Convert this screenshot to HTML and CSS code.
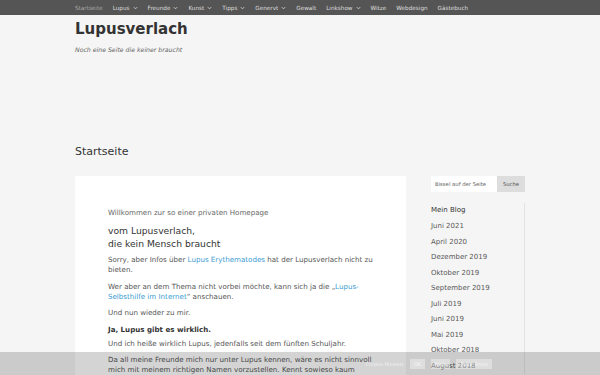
FILE: index.html
```html
<!DOCTYPE html>
<html>
<head>
  <title>Lupusverlach</title>
  <meta name="viewport" content="width=device-width, initial-scale=1.0" />
  <link rel="stylesheet" href="styles.css">
</head>
<body>

  <nav class="topnav">
    <div class="wrap nav-items">
      <a class="current">Startseite</a>
      <a>Lupus <svg class="chev" viewBox="0 0 6 4"><polyline points="1,1 3,3 5,1"/></svg></a>
      <a>Freunde <svg class="chev" viewBox="0 0 6 4"><polyline points="1,1 3,3 5,1"/></svg></a>
      <a>Kunst <svg class="chev" viewBox="0 0 6 4"><polyline points="1,1 3,3 5,1"/></svg></a>
      <a>Tipps <svg class="chev" viewBox="0 0 6 4"><polyline points="1,1 3,3 5,1"/></svg></a>
      <a>Genervt <svg class="chev" viewBox="0 0 6 4"><polyline points="1,1 3,3 5,1"/></svg></a>
      <a>Gewalt</a>
      <a>Linkshow <svg class="chev" viewBox="0 0 6 4"><polyline points="1,1 3,3 5,1"/></svg></a>
      <a>Witze</a>
      <a>Webdesign</a>
      <a>Gästebuch</a>
    </div>
  </nav>

  <header class="wrap site-header">
    <h1 class="site-title">Lupusverlach</h1>
    <p class="tagline">Noch eine Seite die keiner braucht</p>
  </header>

  <div class="wrap page-title">Startseite</div>

  <div class="wrap main">
    <article class="content">
      <p class="intro">Willkommen zur so einer privaten Homepage</p>
      <h2>vom Lupusverlach,<br>die kein Mensch braucht</h2>
      <p>Sorry, aber Infos über <a href="#">Lupus Erythematodes</a> hat der Lupusverlach nicht zu bieten.</p>
      <p>Wer aber an dem Thema nicht vorbei möchte, kann sich ja die „<a href="#">Lupus-Selbsthilfe im Internet</a>“ anschauen.</p>
      <p>Und nun wieder zu mir.</p>
      <h3>Ja, Lupus gibt es wirklich.</h3>
      <p>Und ich heiße wirklich Lupus, jedenfalls seit dem fünften Schuljahr.</p>
      <p>Da all meine Freunde mich nur unter Lupus kennen, wäre es nicht sinnvoll mich mit meinem richtigen Namen vorzustellen. Kennt sowieso kaum jemand.</p>
    </article>

    <aside class="sidebar">
      <form class="search">
        <input type="text" placeholder="Bissel auf der Seite">
        <button type="button">Suche</button>
      </form>
      <div class="widget">
        <h4>Mein Blog</h4>
        <ul>
          <li>Juni 2021</li>
          <li>April 2020</li>
          <li>Dezember 2019</li>
          <li>Oktober 2019</li>
          <li>September 2019</li>
          <li>Juli 2019</li>
          <li>Juni 2019</li>
          <li>Mai 2019</li>
          <li>Oktober 2018</li>
          <li>August 2018</li>
        </ul>
      </div>
    </aside>
  </div>

  <div class="cookie-bar">
    <span class="cookie-text">Cookie-Hinweis</span>
    <span class="cookie-btn">OK</span>
    <span class="cookie-btn">Nein</span>
    <span class="cookie-btn">Mehr lesen</span>
  </div>

</body>
</html>
```

FILE: styles.css
```css
body {
  font-family: "DejaVu Sans", Verdana, sans-serif;
  background-color: #f5f5f5;
  color: #555;
  margin: 0;
}

.wrap {
  width: 450px;
  margin: 0 auto;
}

.topnav {
  background-color: #555;
  height: 15px;
}

.nav-items {
  display: flex;
  gap: 10px;
  align-items: center;
  height: 15px;
  font-size: 5.7px;
}

.nav-items a {
  color: #dedede;
  display: flex;
  align-items: center;
  gap: 3px;
  white-space: nowrap;
}

.nav-items a.current {
  color: #a8a8a8;
}

.chev {
  width: 5px;
  height: 4px;
  fill: none;
  stroke: #ddd;
  stroke-width: 1;
}

.site-header {
  padding-top: 2px;
  height: 128px;
}

.site-title {
  font-size: 15px;
  font-weight: bold;
  color: #333;
  margin: 0;
  line-height: 24px;
}

.tagline {
  font-size: 6.2px;
  font-style: italic;
  color: #666;
  margin: 5px 0 0;
}

.page-title {
  font-size: 11px;
  color: #333;
  line-height: 14px;
}

.main {
  display: flex;
  gap: 25px;
  margin-top: 17px;
  align-items: flex-start;
}

.content {
  width: 331px;
  background: #fff;
  padding: 32px 33px 20px;
  box-sizing: border-box;
  font-size: 7.1px;
  line-height: 10px;
  min-height: 220px;
}

.content p {
  margin: 0 0 6.5px;
}

.content .intro {
  color: #666;
  margin-bottom: 5.5px;
}

.content h2 {
  font-size: 9.2px;
  font-weight: normal;
  color: #333;
  line-height: 13px;
  margin: 0 0 5.5px;
}

.content h3 {
  font-size: 7.1px;
  font-weight: bold;
  color: #333;
  margin: 1.5px 0 4px;
  line-height: 10px;
}

.content a {
  color: #3b9cd1;
  text-decoration: none;
}

.sidebar {
  width: 94px;
  padding-top: 0;
}

.search {
  display: flex;
  height: 16px;
  margin: 0;
}

.search input {
  width: 66px;
  border: none;
  padding: 0 4px;
  font-size: 5.3px;
  font-family: inherit;
  background: #fff;
  box-sizing: border-box;
}

.search input::placeholder {
  color: #666;
}

.search button {
  width: 28px;
  border: none;
  background: #ddd;
  font-size: 5.3px;
  font-family: inherit;
  color: #555;
  padding: 0;
}

.widget {
  margin-top: 11px;
  border-right: 1px solid #e2e2e2;
  font-size: 7px;
}

.widget h4 {
  font-size: 7px;
  font-weight: normal;
  color: #333;
  margin: 0 0 2px;
  line-height: 14px;
}

.widget ul {
  list-style: none;
  margin: 0;
  padding: 0;
}

.widget li {
  line-height: 15.5px;
  color: #595959;
}

.cookie-bar {
  position: fixed;
  left: 0;
  right: 0;
  bottom: 0;
  height: 23px;
  background: rgba(0, 0, 0, 0.17);
  display: flex;
  align-items: center;
  justify-content: flex-end;
  gap: 6px;
  padding-right: 108px;
  font-size: 5px;
  color: rgba(255, 255, 255, 0.6);
}

.cookie-btn {
  background: rgba(255, 255, 255, 0.35);
  padding: 2px 4px;
  color: rgba(255, 255, 255, 0.7);
}
```
